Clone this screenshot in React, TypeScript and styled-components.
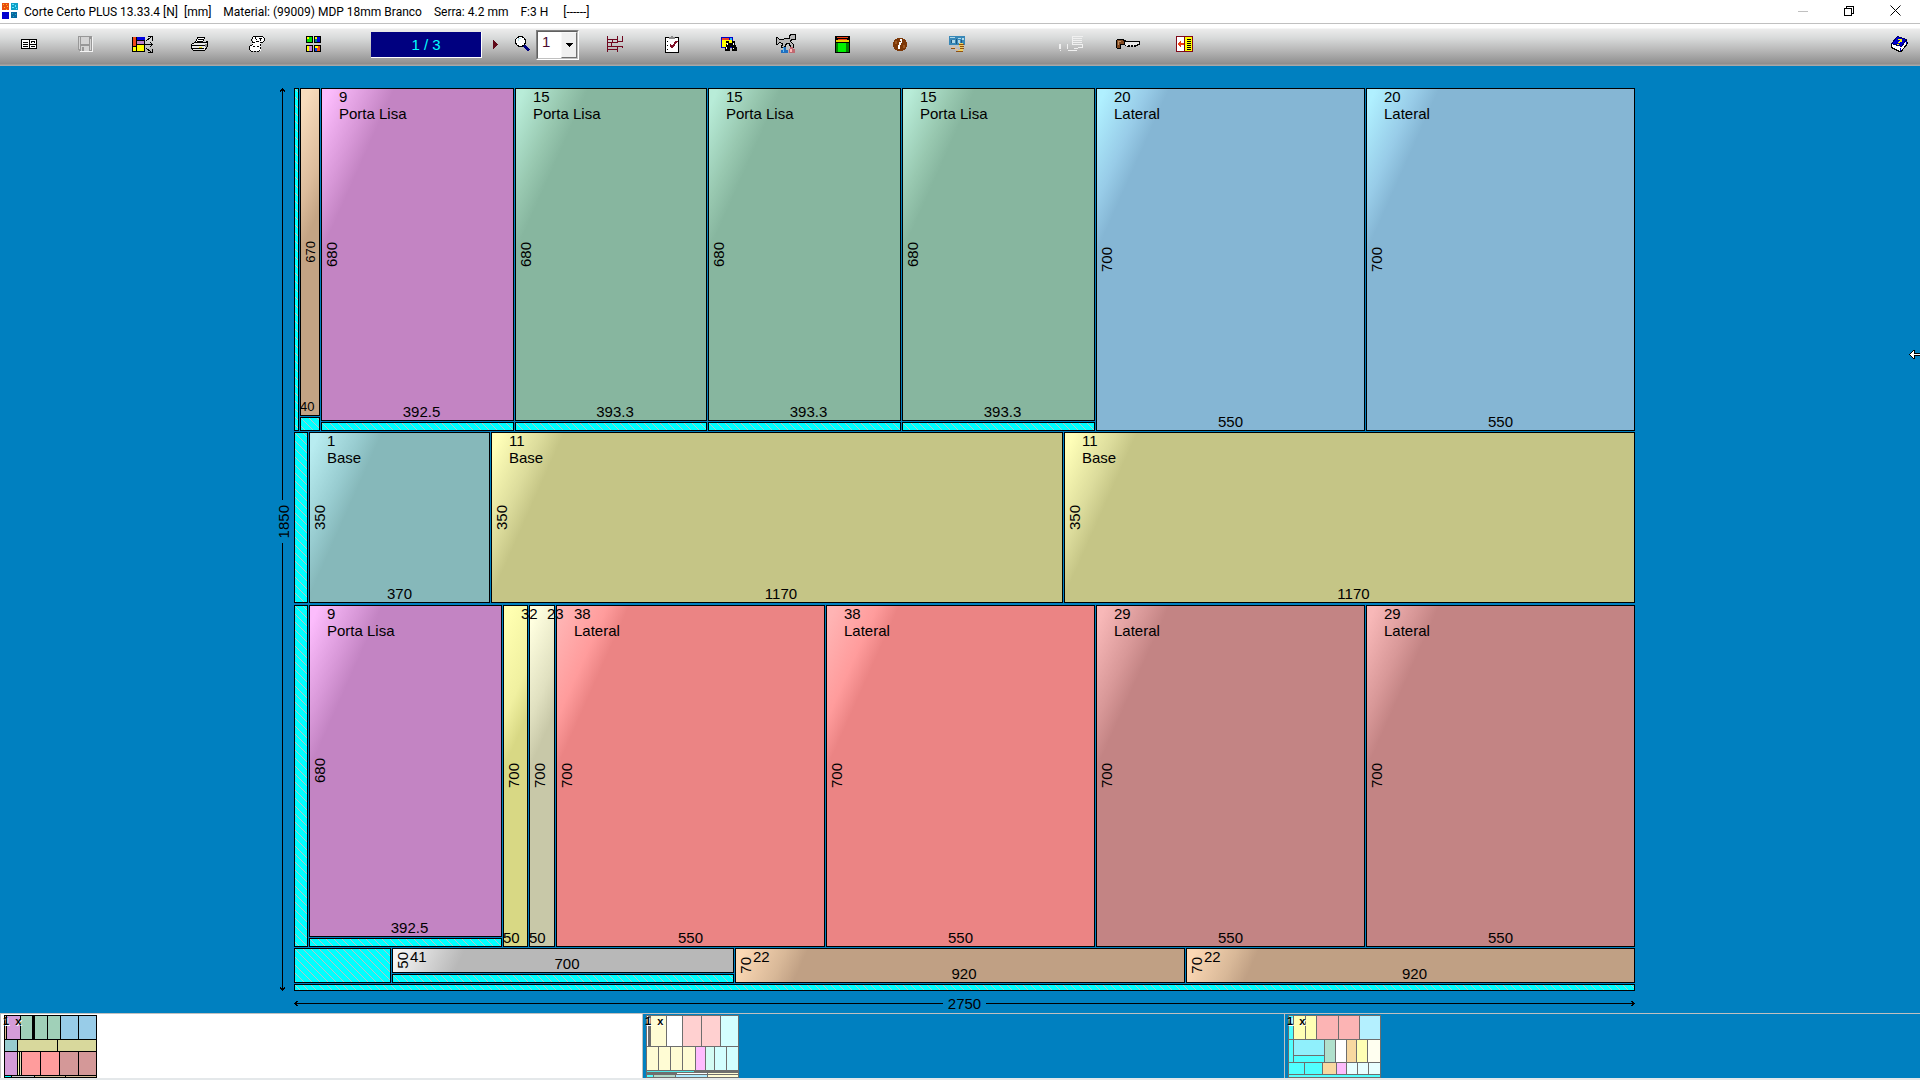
import React from "react";
import styled, { createGlobalStyle } from "styled-components";

const GlobalStyle = createGlobalStyle`
  *, *::before, *::after { box-sizing: border-box; }
  body {
    margin: 0;
    background: #0080c0;
    overflow: hidden;
    font-family: "Liberation Sans", Arial, sans-serif;
    color: #000;
  }
  button, select { font: inherit; color: inherit; }
`;

/* ---------- window frame ---------- */

const Window = styled.div`
  display: flex;
  flex-direction: column;
  min-height: 100vh;
  background: #0080c0;
`;

const TitleBar = styled.header`
  display: flex;
  align-items: center;
  height: 24px;
  padding: 0 2px 2px;
  background: #fff;
  border-bottom: 1px solid #c0c0c0;
`;

const Title = styled.h1`
  display: flex;
  flex: 1;
  gap: 12px;
  margin: 0 0 0 6px;
  padding-top: 2px;
  font: 400 12px/18px Roboto, "Noto Sans", sans-serif;
  white-space: pre;
`;

const WindowButton = styled.button`
  display: grid;
  place-items: center;
  width: 46px;
  height: 20px;
  padding: 0;
  border: 0;
  background: none;
`;

const Toolbar = styled.div`
  display: flex;
  align-items: center;
  height: 42px;
  background: linear-gradient(#fff 0, #fff 4px, #ececec 5px, #d8dada 14px, #b8b8b8 26px, #949494 38px, #8c8c8c 40px, #a8a8a8 41px);
`;

const ToolButton = styled.button`
  display: grid;
  place-items: center;
  flex: none;
  width: 57px;
  height: 42px;
  padding: 0 0 2px;
  border: 0;
  background: none;
`;

const SlimButton = styled(ToolButton)`
  width: 27px;
`;

const Counter = styled.output`
  width: 111px;
  height: 26px;
  margin-left: 29px;
  border: solid #fff;
  border-width: 0 1px 1px 0;
  background: #000080;
  color: #00ffff;
  font-size: 15px;
  line-height: 25px;
  text-align: center;
`;

const Picker = styled.label`
  display: grid;
  grid-template-columns: 1fr 17px;
  width: 43px;
  height: 30px;
  margin: 0 7px 0 0;
  border: 1px solid #fff;
  border-top-color: #808080;
  border-left-color: #808080;
  background: #fff;
`;

const PickerSelect = styled.select`
  grid-area: 1 / 1 / 2 / 3;
  appearance: none;
  padding: 0 0 8px 4px;
  border: 1px solid #c0c0c0;
  border-top-color: #606060;
  border-left-color: #606060;
  border-radius: 0;
  background: #fff;
  color: #4a0a30;
  font-size: 15px;
`;

const PickerArrow = styled.span`
  grid-area: 1 / 2;
  display: grid;
  place-items: center;
  margin: 1px 1px 1px 0;
  border: 1px solid #f8f8f8;
  border-right-color: #707070;
  border-bottom-color: #707070;
  background: #f0f0f0;
  pointer-events: none;
`;

const Spacer = styled.div<{ $grow?: boolean }>`
  flex: ${(p) => (p.$grow ? "1" : "none")};
  width: 57px;
`;

const HelpButton = styled(ToolButton)`
  width: 42px;
`;

/* ---------- drawing area ---------- */

const Stage = styled.main`
  position: relative;
  display: grid;
  grid-template-columns: 1fr auto 1fr;
  padding: 22px 0 1px 9px;
`;

const Sheet = styled.div`
  display: grid;
  grid-template-rows: 343fr 172fr 342fr 35fr 7fr;
  gap: 1px;
  height: calc(100vh - 177px);
  aspect-ratio: 1341 / 903;
`;

const tracks = (list: number[]) => list.map((n) => `minmax(0, ${n}fr)`).join(" ");

const Across = styled.div<{ $tracks: number[]; $kerf?: boolean }>`
  display: grid;
  gap: 1px;
  min-height: 0;
  padding-bottom: ${(p) => (p.$kerf ? "1px" : "0")};
  grid-template-columns: ${(p) => tracks(p.$tracks)};
`;

const Down = styled.div<{ $tracks: number[] }>`
  display: grid;
  gap: 1px;
  min-height: 0;
  grid-template-rows: ${(p) => tracks(p.$tracks)};
`;

const Waste = styled.div`
  border: 1px solid #000;
  background: linear-gradient(45deg, #00ffff 45%, #b8c4c4 45%, #b8c4c4 55%, #00ffff 55%) 0 0 / 8px 8px;
`;

type Tone = [string, string, string];

const PieceBox = styled.div<{ $tone: Tone }>`
  display: grid;
  grid-template: minmax(0, 1fr) / minmax(0, 1fr);
  min-width: 0;
  border: 1px solid #000;
  background: linear-gradient(
    114deg,
    ${(p) => p.$tone[0]} 0,
    ${(p) => p.$tone[0]} 8px,
    ${(p) => p.$tone[1]} 46px,
    ${(p) => p.$tone[2]} 66px
  );
  font-size: 15px;
  line-height: 17px;
  white-space: nowrap;
`;

const PieceName = styled.div`
  grid-area: 1 / 1;
  place-self: start;
  z-index: 1;
  margin: -1px 0 0 17px;
`;

const PieceWidth = styled.div<{ $small?: boolean; $start?: boolean; $wide?: boolean }>`
  grid-area: 1 / 1;
  place-self: end ${(p) => (p.$start ? "start" : "center")};
  margin-left: ${(p) => (p.$start ? "-1px" : "0")};
  padding-left: ${(p) => (p.$wide ? "8px" : "0")};
  font-size: ${(p) => (p.$small ? "13px" : "15px")};
`;

const PieceHeight = styled.div<{ $small?: boolean }>`
  grid-area: 1 / 1;
  place-self: center start;
  margin-left: 1px;
  writing-mode: vertical-rl;
  transform: rotate(180deg);
  font-size: ${(p) => (p.$small ? "13px" : "15px")};
`;

const tone = {
  peach: ["#f8dcbc", "#dcbc9c", "#c4a484"] as Tone,
  purple: ["#fcbcfc", "#d898d8", "#c384c3"] as Tone,
  green: ["#b8ecd8", "#98c8b0", "#87b69f"] as Tone,
  blue: ["#b0f0ff", "#98cce8", "#85b6d4"] as Tone,
  teal: ["#b8ecf0", "#98ccd0", "#86b8ba"] as Tone,
  olive: ["#ffffb8", "#dcdc9c", "#c5c586"] as Tone,
  yellow: ["#ffffb0", "#f0f0a0", "#d8d884"] as Tone,
  cream: ["#ffffe0", "#e0e0c0", "#c8c8a8"] as Tone,
  red: ["#ffb4b4", "#ff9c9c", "#eb8484"] as Tone,
  brick: ["#f8b8b8", "#d89898", "#c38484"] as Tone,
  grey: ["#f4f4f4", "#cccccc", "#b8b8b8"] as Tone,
  tan: ["#fcd8b4", "#d8b898", "#c0a084"] as Tone,
};

type PieceProps = {
  id?: number;
  name?: string;
  w: string;
  h: string;
  color: Tone;
  small?: boolean;
  narrow?: boolean;
  wide?: boolean;
};

function Piece({ id, name, w, h, color, small, narrow, wide }: PieceProps) {
  return (
    <PieceBox $tone={color}>
      {id !== undefined && (
        <PieceName>
          <div>{id}</div>
          {name && <div>{name}</div>}
        </PieceName>
      )}
      <PieceHeight $small={small}>{h}</PieceHeight>
      <PieceWidth $small={small} $start={narrow} $wide={wide}>
        {w}
      </PieceWidth>
    </PieceBox>
  );
}

const SideRuler = styled.div`
  display: flex;
  flex-direction: column;
  align-items: center;
  justify-self: end;
  width: 17px;
  margin-right: 3px;
  font-size: 15px;
  line-height: 17px;
`;

const SideLabel = styled.span`
  padding: 5px 0;
  margin-left: 2px;
  writing-mode: vertical-rl;
  transform: rotate(180deg);
`;

const SideLine = styled.div<{ $grow: number }>`
  flex: ${(p) => p.$grow} 1 0;
  width: 1px;
  background: #000;
`;

const BottomRuler = styled.div`
  grid-column: 2;
  display: flex;
  align-items: center;
  height: 17px;
  margin-top: 4px;
  font-size: 15px;
  line-height: 17px;
`;

const BottomLabel = styled.span`
  padding: 0 5px;
`;

const BottomLine = styled.div`
  flex: 1;
  height: 1px;
  background: #000;
`;

const Head = styled.svg<{ $side: "top" | "bottom" | "left" | "right" }>`
  flex: none;
  display: block;
  ${(p) => ({ top: "margin-bottom", bottom: "margin-top", left: "margin-right", right: "margin-left" })[p.$side]}: -5px;
`;

const Pointer = styled.svg`
  position: absolute;
  top: 284px;
  right: 0;
`;

function ArrowHead({ side }: { side: "top" | "bottom" | "left" | "right" }) {
  const shape = {
    top: "M2 0h1v1h1v1h1v2h-1v-1h-3v1h-1v-2h1v-1h1z",
    bottom: "M2 5h1v-1h1v-1h1v-2h-1v1h-3v-1h-1v2h1v1h1z",
    left: "M0 2v1h1v1h1v1h2v-1h-1v-3h1v-1h-2v1h-1v1z",
    right: "M5 2v1h-1v1h-1v1h-2v-1h1v-3h-1v-1h2v1h1v1z",
  }[side];
  return (
    <Head $side={side} width="5" height="5" viewBox="0 0 5 5" shapeRendering="crispEdges" aria-hidden>
      <path d={shape} />
    </Head>
  );
}

/* ---------- plan strip ---------- */

const Strip = styled.nav`
  display: grid;
  grid-template-columns: 642fr 642fr 636fr;
  height: 67px;
  border-top: 1px solid #c0c0c0;
  border-bottom: 2px solid #e4e8ea;
`;

const StripButton = styled.button<{ $active?: boolean }>`
  position: relative;
  display: flex;
  padding: 1px 0 0 3px;
  border: 0;
  border-left: 1px solid #c0c0c0;
  background: ${(p) => (p.$active ? "#fff" : "#0080c0")};
`;

const Mini = styled.span<{ $rows: number[]; $line: string }>`
  display: grid;
  gap: 1px;
  width: 93px;
  height: 63px;
  padding: 1px;
  background: ${(p) => p.$line};
  grid-template-rows: ${(p) => tracks(p.$rows)};
`;

const MiniRow = styled.span<{ $cells: number[] }>`
  display: grid;
  gap: 1px;
  grid-template-columns: ${(p) => tracks(p.$cells)};
`;

const MiniCell = styled.span<{ $color: string; $foot?: string; $line: string }>`
  background: ${(p) =>
    p.$foot
      ? `linear-gradient(to top, ${p.$foot} 25%, ${p.$line} 25%, ${p.$line} 30%, ${p.$color} 30%)`
      : p.$color};
`;

const MiniTag = styled.span`
  position: absolute;
  top: 1px;
  left: 2px;
  color: #000;
  font-size: 11px;
  font-weight: 700;
  line-height: 12px;
  white-space: pre;
  text-shadow: 1px 1px 0 #fff;
`;

type Cell = [number, string, string?];
type Plan = { line: string; rows: { h: number; cells: Cell[] }[] };

const plans: Plan[] = [
  {
    line: "#000000",
    rows: [
      { h: 23, cells: [[1, "#e0b890"], [13, "#d49cd8"], [12, "#a0d0b8"], [1, "#000"], [12, "#a0d0b8"], [12, "#a0d0b8"], [18, "#98cce8"], [17, "#98cce8"]] },
      { h: 11, cells: [[12, "#98ccd0"], [38, "#d8d89c"], [38, "#d8d89c"]] },
      { h: 23, cells: [[12, "#d49cd8"], [1, "#f4f4a8"], [1, "#e0e0c0"], [18, "#ff9c9c"], [18, "#ff9c9c"], [18, "#d49898"], [17, "#d49898"]] },
      { h: 1, cells: [[6, "#00ffff"], [22, "#c8c8c8"], [30, "#d8bc98"], [30, "#d8bc98"]] },
    ],
  },
  {
    line: "#6e6e6e",
    rows: [
      { h: 30, cells: [[1, "#fff"], [1, "#6e6e6e"], [15, "#fffcd4"], [15, "#ffffff"], [18, "#ffd0d0"], [18, "#ffd0d0"], [17, "#d4ffff"]] },
      { h: 23, cells: [[11, "#fffcd4"], [11, "#fffcd4"], [11, "#fffcd4"], [11, "#fffcd4"], [9, "#ffbcff"], [8, "#d4fcf4"], [11, "#d4ffff"], [11, "#d4ffff"]] },
      { h: 1, cells: [[46, "#50e8e8"], [42, "#6e6e6e"]] },
      { h: 1, cells: [[29, "#6e6e6e"], [30, "#ffffff"], [30, "#fffcd4"]] },
      { h: 2, cells: [[6, "#50ffff"], [21, "#b0d8c8"], [30, "#b0ecff"], [30, "#fffcd4"]] },
    ],
  },
  {
    line: "#6e6e6e",
    rows: [
      { h: 22, cells: [[4, "#50ffff"], [11, "#ffffb4"], [10, "#ffffb4"], [20, "#fcb4b4"], [20, "#fcb4b4"], [20, "#b4f0ff"]] },
      { h: 21, cells: [[4, "#50ffff"], [30, "#90f0fc", "#50ffff"], [10, "#b0e0cc"], [10, "#ffffff"], [9, "#f8d8a0"], [10, "#ffffb4"], [12, "#fffff0"]] },
      { h: 11, cells: [[15, "#50ffff"], [17, "#50ffff"], [12, "#f8d8a0"], [9, "#fcbcfc"], [10, "#e8ffff"], [10, "#e8ffff"], [11, "#e8ffff"]] },
      { h: 2, cells: [[1, "#50ffff"]] },
    ],
  },
];

function PlanThumb({ plan, active, label }: { plan: Plan; active?: boolean; label: string }) {
  return (
    <StripButton $active={active} type="button" aria-label={label}>
      <Mini $rows={plan.rows.map((r) => r.h)} $line={plan.line}>
        {plan.rows.map((row, i) => (
          <MiniRow key={i} $cells={row.cells.map((c) => c[0])}>
            {row.cells.map((c, j) => (
              <MiniCell key={j} $color={c[1]} $foot={c[2]} $line={plan.line} />
            ))}
          </MiniRow>
        ))}
      </Mini>
      <MiniTag>{"1  x"}</MiniTag>
    </StripButton>
  );
}

/* ---------- icons ---------- */

type IconProps = { w?: number; h?: number; children: React.ReactNode };

function Icon({ w = 16, h = 16, children }: IconProps) {
  return (
    <svg width={w} height={h} viewBox={`0 0 ${w} ${h}`} shapeRendering="crispEdges" aria-hidden>
      {children}
    </svg>
  );
}

const AppIcon = () => (
  <Icon w={16} h={16}>
    <path fill="#e84c10" d="M0 0h7v7h-7z" />
    <path fill="#ffc020" d="M1 1h1v1h-1zM4 1h1v1h-1zM2 4h1v1h-1zM5 3h1v1h-1zM4 6h1v1h-1z" />
    <path fill="#10a0c8" d="M9 0h7v7h-7z" />
    <path fill="#60e8ff" d="M10 1h2v1h-2zM13 2h1v2h-1zM10 4h2v1h-2zM14 5h1v1h-1z" />
    <path fill="#0000d0" d="M0 9h7v7h-7z" />
    <path fill="#0868a0" d="M9 9h6v6h-6z" />
    <path fill="#20b0c0" d="M10 10h1v1h-1zM13 11h1v1h-1zM11 13h1v1h-1z" />
  </Icon>
);

const CardIcon = () => (
  <Icon w={16} h={12}>
    <path fill="#000" d="M0 1h16v10h-16z" />
    <path fill="#fff" d="M1 2h7v8h-7zM9 2h6v8h-6z" />
    <path fill="#000" d="M2 4h5v1h-5zM2 6h5v1h-5zM2 8h5v1h-5zM10 3h4v2h-4zM9 6h6v1h-6zM10 8h4v1h-4z" />
    <path fill="#fff" d="M11 4h2v1h-2z" />
  </Icon>
);

const FloppyIcon = () => (
  <Icon w={15} h={16}>
    <path fill="#f4f4f4" d="M1 1h14v15h-13z" />
    <path fill="#989898" d="M0 0h14v15h-13l-1-1z" />
    <path fill="#d4d4d4" d="M1 1h1v12h-1zM3 1h8v7h-8zM12 3h1v11h-1zM3 10h8v5h-8z" />
    <path fill="#989898" d="M4 11h2v4h-2z" />
  </Icon>
);

const OptimizeIcon = () => (
  <Icon w={21} h={17}>
    <path fill="#000" d="M0 1h13v15h-13z" />
    <path fill="#f04818" d="M1 1h3v9h-3z" />
    <path fill="#0000e0" d="M5 1h8v3h-8z" />
    <path fill="#c080c8" d="M5 5h7v3h-7z" />
    <path fill="#ffff00" d="M5 9h7v6h-7zM1 11h3v4h-3z" />
    <path fill="none" stroke="#000" d="M13 8.500h7M18 6l2.500 2.500l-2.500 2.500M14 5l5-4M16 .5h4v4M14 12l5 4M16 16.500h4v-4" />
  </Icon>
);

const PrinterIcon = () => (
  <Icon w={17} h={15}>
    <path fill="#fff" stroke="#000" d="M6.500.5h7l-2 5h-7z" />
    <path fill="#000" d="M7 2h5v1h-5zM6 4h5v1h-5z" />
    <path fill="#e8e8e8" stroke="#000" d="M3.500 5.500h11l2-1v5l-3 4h-11l-2-2v-4z" />
    <path fill="#000" d="M1 8h13v1h-13zM1 11h12v1h-12z" />
    <path fill="#e8e000" d="M8 10h3v1h-3z" />
    <path fill="#888" d="M14 7h2v3h-2z" />
  </Icon>
);

const RollIcon = () => (
  <Icon w={16} h={16}>
    <path fill="#fff" d="M4 1h10l1 2v3l-3 1v8h-10l-1-1v-4l2-1z" />
    <path
      fill="#000"
      d="M4 0h10v1h-10zM14 1h1v1h-1zM15 2h1v3h-1zM14 5h1v1h-1zM11 6h3v1h-3zM3 1h1v2h-1zM2 3h1v2h-1zM3 5h1v2h-1zM4 6h2v1h-2zM7 5h3v1h-3zM6 1h1v2h-1zM7 3h1v1h-1zM10 2h3v1h-3zM11 3h1v2h-1zM11 8h1v2h-1zM11 11h1v2h-1zM3 8h1v1h-1zM1 9h2v1h-2zM4 10h2v1h-2zM8 10h2v1h-2zM0 10h1v4h-1zM1 14h1v1h-1zM2 15h2v1h-2zM5 15h2v1h-2zM8 15h2v1h-2zM10 14h1v1h-1z"
    />
  </Icon>
);

const MosaicIcon = () => (
  <Icon w={15} h={16}>
    <path fill="#000" d="M0 0h7v7h-7zM8 0h7v7h-7zM0 9h7v7h-7zM8 9h7v7h-7z" />
    <path fill="#ffff00" d="M1 1h2v2h-2zM9 1h2v2h-2zM1 10h2v5h-2zM9 10h3v2h-3z" />
    <path fill="#00e000" d="M3 1h3v5h-3zM1 3h2v3h-2z" />
    <path fill="#0000d8" d="M11 1h3v5h-3z" />
    <path fill="#008080" d="M9 3h2v3h-2z" />
    <path fill="#c080e0" d="M3 10h3v5h-3z" />
    <path fill="#0040ff" d="M9 12h2v3h-2z" />
    <path fill="#f05010" d="M12 10h2v5h-3v-3h1z" />
  </Icon>
);

const NextIcon = () => (
  <Icon w={6} h={9}>
    <path fill="#600818" d="M0 0h1v1h1v1h1v1h1v1h1v1h-1v1h-1v1h-1v1h-1v1h-1z" />
  </Icon>
);

const LensIcon = () => (
  <Icon w={15} h={16}>
    <path fill="none" stroke="#000080" strokeWidth="3" d="M9 9.500l5 5" />
    <circle cx="5.500" cy="5.500" r="5" fill="#fff" stroke="#000" />
    <path fill="#b8e0e8" d="M3 2h3v1h-2v2h-1z" />
  </Icon>
);

const BricksIcon = () => (
  <Icon>
    <path
      fill="none"
      stroke="#700820"
      d="M.5 0v16M0 3.500h11M10.500 0v7M0 6.500h11M5.500 3v4M15.500 0v6M11 5.500h5M0 10.500h16M4.500 7v4M10.500 10v6M0 13.500h11M15.500 10v2"
    />
  </Icon>
);

const ChecklistIcon = () => (
  <Icon w={14} h={17}>
    <path fill="#fff" stroke="#000" d="M.5 1.500h13v15h-13z" />
    <path fill="#888" d="M4 1h6v2h-6zM6 0h2v1h-2z" />
    <path fill="#000" d="M2 5h1v1h-1zM2 9h1v1h-1zM2 13h1v1h-1z" />
    <path fill="none" stroke="#801028" strokeWidth="2" d="M5 8.500l2 2.500l5-6" />
  </Icon>
);

const FindIcon = () => (
  <Icon w={16} h={16}>
    <path fill="#0000c8" d="M0 1h12v11h-12z" />
    <path fill="#ffff00" d="M1 4h10v7h-10z" />
    <path fill="#f04020" d="M1 2h7v2h-7z" />
    <path fill="#30c0f0" d="M9 2h2v2h-2z" />
    <path fill="#000" d="M5 5h3v2h3v-2h3v4h1v2h1v4h-5v-4h-2v4h-5v-4h1v-3h1z" />
    <path fill="#fff" d="M6 7h1v2h-1zM12 7h1v2h-1zM5 11h1v2h-1zM12 12h1v1h-1z" />
  </Icon>
);

const ToolsIcon = () => (
  <Icon w={20} h={20}>
    <path fill="#b8b8b8" stroke="#000" d="M.5 3.500h1l2 2l10-1v-3l2-1h4v5h-4l-1 2l3 3v3h-3l-1-4h-3l-2 4h-3l1-4l-3-1l-2 2h-1z" />
    <path fill="#2070c0" d="M7 13h3v3h2v3h-7v-3h2z" />
    <path fill="#60c0ff" d="M7 14h1v4h-1z" />
    <path fill="#c06870" d="M14 13h3v2h2v4h-6v-4h1z" />
    <path fill="#ffb8b8" d="M14 15h2v3h-2z" />
  </Icon>
);

const BarrelIcon = () => (
  <Icon w={15} h={17}>
    <path fill="#000" d="M0 0h15v17h-15z" />
    <path fill="#f04010" d="M2 1h11v1h-11zM3 3h9v1h-9z" />
    <path fill="#e8d000" d="M1 4h13v2h-13z" />
    <path fill="#008000" d="M1 7h13v9h-13z" />
    <path fill="#00f000" d="M3 7h8v9h-8z" />
  </Icon>
);

const CoffeeIcon = () => (
  <Icon w={14} h={15}>
    <ellipse cx="7" cy="7.500" rx="7" ry="7" fill="#7c3808" />
    <path fill="#a05820" d="M2 4h2v3h-2zM10 8h2v3h-2z" />
    <path fill="#fff" d="M7 2h2v2h-2zM6 5h2v3h-1v4h-2v-4h1zM8 4h1v2h-1z" />
  </Icon>
);

const MoneyIcon = () => (
  <Icon w={16} h={16}>
    <path fill="#3888b8" d="M0 0h16v9h-16z" />
    <path fill="#b0d8e8" d="M1 1h5v1h-5zM3 4h3v3h-3zM9 2h3v1h-3zM9 4h2v3h-2zM13 2h2v2h-2z" />
    <path fill="#205880" d="M7 3h1v5h-1zM2 4h1v3h-1zM12 4h1v4h-1z" />
    <path fill="#f0d060" d="M10 7h4v8h-5v-1h2z" />
    <path fill="#905010" d="M10 8h5v1h-5zM11 10h4v1h-4zM11 12h4v1h-4zM7 15h7v1h-7zM2 12h4v1h-4z" />
    <path fill="#f0c090" d="M3 11h3v1h-3zM6 13h3v1h-3z" />
  </Icon>
);

const GhostListIcon = () => (
  <Icon w={24} h={16}>
    <path fill="#f0f0f0" d="M13 0h11v1h-11zM14 2h9v1h-9zM14 4h9v1h-9zM14 6h9v1h-9zM13 8h11v1h-11zM13 0h1v9h-1zM0 8h2v5h-2zM1 14h1v1h-1zM8 8h1v5h-1zM9 14h6v1h-6zM15 12h4v1h-4zM19 11h5v1h-5zM23 9h1v2h-1zM15 14h3v1h-3z" />
  </Icon>
);

const SawIcon = () => (
  <Icon w={24} h={11}>
    <path fill="#000" d="M1 0h7v1h2v1h14v4h-2v1h-2v1h-2v-1h-1v1h-2v-1h-1v1h-3v-1h-2v-1h-4v4h-4v-1h-1v-8h1z" />
    <path fill="#804820" d="M1 1h6v1h1v3h-4v4h-3z" />
    <path fill="#e8e8e8" d="M9 3h14v2h-2v1h-3v1h-1v-1h-2v1h-1v-1h-2v1h-2v-1h-1z" />
    <path fill="#c09060" d="M2 2h3v1h-2v3h-1z" />
  </Icon>
);

const ExitIcon = () => (
  <Icon w={17} h={16}>
    <path fill="#fff" stroke="#800818" d="M.5.5h8v15h-8z" />
    <path fill="#ffff00" stroke="#800818" d="M8.500.5h8v15h-8z" />
    <path fill="#000" d="M11 3h4v1h-4zM11 5h4v1h-4zM11 7h4v1h-4zM11 9h4v1h-4zM11 11h4v1h-4zM11 13h4v1h-4z" />
    <path fill="#f04010" d="M2 7h1v-1h1v-1h1v2h3v2h-3v2h-1v-1h-1v-1h-1z" />
  </Icon>
);

const HelpIcon = () => (
  <Icon w={17} h={16}>
    <path fill="#fff" stroke="#000" d="M.5 8.500l5-6l10 1l1 4l-6 7.500l-2 .5l-8-4z" />
    <path fill="#0000d0" stroke="#000060" d="M6.500.5l9 3l-5 7l-10-3z" />
    <path fill="#0000c0" d="M9 12h1v3h-1zM15 5h1v3h-1z" />
    <path fill="#ffff00" d="M7 3h4v3h-2v1h-2v-1h1v-1h1v-1h-2zM6 8h2v1h-2z" />
  </Icon>
);

const firstTools = [
  { label: "Cadastro", icon: <CardIcon /> },
  { label: "Salvar", icon: <FloppyIcon /> },
  { label: "Otimizar", icon: <OptimizeIcon /> },
  { label: "Imprimir", icon: <PrinterIcon /> },
  { label: "Etiquetas", icon: <RollIcon /> },
  { label: "Planos", icon: <MosaicIcon /> },
];

const planTools = [
  { label: "Cortes", icon: <BricksIcon /> },
  { label: "Lista", icon: <ChecklistIcon /> },
  { label: "Localizar", icon: <FindIcon /> },
  { label: "Ferramentas", icon: <ToolsIcon /> },
  { label: "Estoque", icon: <BarrelIcon /> },
  { label: "Pausa", icon: <CoffeeIcon /> },
  { label: "Custos", icon: <MoneyIcon /> },
];

const lastTools = [
  { label: "Relatório", icon: <GhostListIcon /> },
  { label: "Serra", icon: <SawIcon /> },
  { label: "Sair", icon: <ExitIcon /> },
];

const renderTool = (t: { label: string; icon: React.ReactNode }) => (
  <ToolButton key={t.label} type="button" aria-label={t.label}>
    {t.icon}
  </ToolButton>
);

/* ---------- page ---------- */

export default function App() {
  return (
    <Window>
      <GlobalStyle />
      <TitleBar>
        <AppIcon />
        <Title>
          <span>{"Corte Certo PLUS 13.33.4 [N]  [mm]"}</span>
          <span>Material: (99009) MDP 18mm Branco</span>
          <span>Serra: 4.2 mm</span>
          <span>F:3 H</span>
          <span>{" [------]"}</span>
        </Title>
        <WindowButton type="button" aria-label="Minimizar">
          <Icon w={10} h={10}>
            <path stroke="#c0c0c0" d="M0 5.500h10" />
          </Icon>
        </WindowButton>
        <WindowButton type="button" aria-label="Restaurar">
          <Icon w={10} h={10}>
            <path fill="none" stroke="#000" d="M.5 2.500h7v7h-7zM2.500 2.500v-2h7v7h-2" />
          </Icon>
        </WindowButton>
        <WindowButton type="button" aria-label="Fechar">
          <svg width="11" height="11" viewBox="0 0 11 11" aria-hidden>
            <path stroke="#000" d="M.5.5l10 10M10.500.5l-10 10" />
          </svg>
        </WindowButton>
      </TitleBar>

      <Toolbar>
        {firstTools.map(renderTool)}
        <Counter>1 / 3</Counter>
        <SlimButton type="button" aria-label="Próximo plano">
          <NextIcon />
        </SlimButton>
        <SlimButton type="button" aria-label="Zoom">
          <LensIcon />
        </SlimButton>
        <Picker>
          <PickerSelect aria-label="Escala" defaultValue="1">
            <option>1</option>
            <option>2</option>
            <option>3</option>
          </PickerSelect>
          <PickerArrow>
            <Icon w={7} h={4}>
              <path d="M0 0h7v1h-1v1h-1v1h-1v1h-1v-1h-1v-1h-1v-1h-1z" />
            </Icon>
          </PickerArrow>
        </Picker>
        {planTools.map(renderTool)}
        <Spacer />
        {lastTools.map(renderTool)}
        <Spacer $grow />
        <HelpButton type="button" aria-label="Ajuda">
          <HelpIcon />
        </HelpButton>
      </Toolbar>

      <Stage>
        <SideRuler>
          <ArrowHead side="top" />
          <SideLine $grow={413} />
          <SideLabel>1850</SideLabel>
          <SideLine $grow={449} />
          <ArrowHead side="bottom" />
        </SideRuler>

        <Sheet>
          <Across $tracks={[5, 20, 193, 192, 193, 193, 269, 269]}>
            <Waste />
            <Down $tracks={[328, 14]}>
              <Piece w="40" h="670" color={tone.peach} small narrow />
              <Waste />
            </Down>
            <Down $tracks={[333, 9]}>
              <Piece id={9} name="Porta Lisa" w="392.5" h="680" color={tone.purple} wide />
              <Waste />
            </Down>
            {[0, 1, 2].map((n) => (
              <Down key={n} $tracks={[333, 9]}>
                <Piece id={15} name="Porta Lisa" w="393.3" h="680" color={tone.green} wide />
                <Waste />
              </Down>
            ))}
            <Piece id={20} name="Lateral" w="550" h="700" color={tone.blue} />
            <Piece id={20} name="Lateral" w="550" h="700" color={tone.blue} />
          </Across>

          <Across $tracks={[14, 181, 572, 571]} $kerf>
            <Waste />
            <Piece id={1} name="Base" w="370" h="350" color={tone.teal} />
            <Piece id={11} name="Base" w="1170" h="350" color={tone.olive} wide />
            <Piece id={11} name="Base" w="1170" h="350" color={tone.olive} wide />
          </Across>

          <Across $tracks={[14, 193, 25, 26, 269, 269, 269, 269]}>
            <Waste />
            <Down $tracks={[332, 9]}>
              <Piece id={9} name="Porta Lisa" w="392.5" h="680" color={tone.purple} wide />
              <Waste />
            </Down>
            <Piece id={32} w="50" h="700" color={tone.yellow} narrow />
            <Piece id={23} w="50" h="700" color={tone.cream} narrow />
            <Piece id={38} name="Lateral" w="550" h="700" color={tone.red} />
            <Piece id={38} name="Lateral" w="550" h="700" color={tone.red} />
            <Piece id={29} name="Lateral" w="550" h="700" color={tone.brick} />
            <Piece id={29} name="Lateral" w="550" h="700" color={tone.brick} />
          </Across>

          <Across $tracks={[97, 342, 450, 449]}>
            <Waste />
            <Down $tracks={[25, 9]}>
              <Piece id={41} w="700" h="50" color={tone.grey} wide />
              <Waste />
            </Down>
            <Piece id={22} w="920" h="70" color={tone.tan} wide />
            <Piece id={22} w="920" h="70" color={tone.tan} wide />
          </Across>

          <Waste />
        </Sheet>

        <BottomRuler>
          <ArrowHead side="left" />
          <BottomLine />
          <BottomLabel>2750</BottomLabel>
          <BottomLine />
          <ArrowHead side="right" />
        </BottomRuler>

        <Pointer width="11" height="9" viewBox="0 0 11 9" shapeRendering="crispEdges" aria-hidden>
          <path fill="#000" d="M0 4h1v-1h1v-1h1v-1h1v-1h2v3h5v3h-5v3h-2v-1h-1v-1h-1v-1h-1v-1h-1z" />
          <path fill="#fff" d="M1 4h1v-1h1v-1h1v-1h1v3h6v1h-6v3h-1v-1h-1v-1h-1v-1h-1z" />
        </Pointer>
      </Stage>

      <Strip aria-label="Planos de corte">
        <PlanThumb plan={plans[0]} label="Plano 1" active />
        <PlanThumb plan={plans[1]} label="Plano 2" />
        <PlanThumb plan={plans[2]} label="Plano 3" />
      </Strip>
    </Window>
  );
}
